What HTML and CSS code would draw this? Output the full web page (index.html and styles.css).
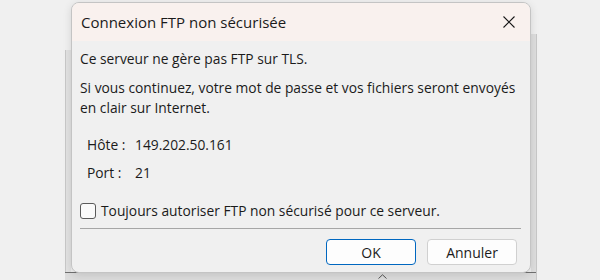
FILE: index.html
```html
<!DOCTYPE html>
<html lang="fr">
<head>
<meta charset="utf-8">
<title>Connexion FTP non sécurisée</title>
<link rel="stylesheet" href="styles.css">
</head>
<body>
<div class="backdrop">
  <div class="back-left"></div>
  <div class="back-right"></div>
  <div class="back-bottom">
    <svg class="caret" width="9" height="5" viewBox="0 0 9 5"><path d="M0.5 4.5 L4.5 0.8 L8.5 4.5" stroke="#555" stroke-width="1" fill="none"/></svg>
  </div>
</div>
<div class="dialog">
  <div class="titlebar">
    <span class="title">Connexion FTP non sécurisée</span>
    <svg class="close" width="12" height="12" viewBox="0 0 12 12"><path d="M0.5 0.5 L11.5 11.5 M11.5 0.5 L0.5 11.5" stroke="#1a1a1a" stroke-width="1.1" fill="none"/></svg>
  </div>
  <div class="content">
    <p class="line first">Ce serveur ne gère pas FTP sur TLS.</p>
    <p class="line para">Si vous continuez, votre mot de passe et vos fichiers seront envoyés<br>en clair sur Internet.</p>
    <div class="info">
      <span class="label">Hôte :</span><span>149.202.50.161</span>
      <span class="label">Port :</span><span>21</span>
    </div>
    <label class="check"><span class="box"></span>Toujours autoriser FTP non sécurisé pour ce serveur.</label>
    <div class="sep"></div>
    <div class="buttons">
      <button class="btn default">OK</button>
      <button class="btn">Annuler</button>
    </div>
  </div>
</div>
</body>
</html>
```
FILE: styles.css
```css
html, body { margin: 0; padding: 0; }
body {
  width: 600px; height: 280px; overflow: hidden;
  background: #f0f0f0;
  font-family: "Segoe UI", "Open Sans", "Noto Sans", sans-serif;
  color: #1b1b1b;
  position: relative;
}
.backdrop { position: absolute; inset: 0; }
.back-left {
  position: absolute; left: 65px; top: 50px; width: 5px; height: 222px;
  background: #e2e2e2; border-left: 1px solid #c8c8c8;
}
.back-right {
  position: absolute; left: 531px; top: 34px; width: 5px; height: 246px;
  background: #dedede; border-right: 1px solid #c8c8c8;
}
.back-bottom {
  position: absolute; left: 65px; top: 272px; width: 471px; height: 8px;
  background: #dcdcdc; border-top: 1px solid #707070;
}
.caret { position: absolute; left: 313px; top: 1px; }
.dialog {
  position: absolute; left: 71px; top: 2px; width: 458px; height: 269px;
  border: 1px solid #c4c4c4; border-radius: 8px; overflow: hidden;
  background: #f0f0f0;
  box-shadow: 0 2px 8px rgba(0,0,0,0.12);
}
.titlebar {
  height: 38px; background: #f9f1ee;
  display: flex; align-items: center; justify-content: space-between;
  padding: 0 15px 0 9px;
}
.title { font-size: 15px; }
.content { padding: 8px 9px 0 8px; font-size: 13.8px; white-space: nowrap; }
.line { margin: 0; line-height: 20px; }
.first { margin-top: 0; }
.para { margin-top: 9px; }
.info {
  display: grid; grid-template-columns: 48px auto; row-gap: 8px;
  margin: 17px 0 0 7px; line-height: 20px;
}
.check { display: flex; align-items: center; gap: 5px; margin-top: 18px; line-height: 20px; }
.box {
  width: 14px; height: 14px; border: 1px solid #5a5a5a; border-radius: 3px; background: #fafafa;
}
.sep { height: 1px; background: #a6a6a6; margin: 7px 0 0 0; }
.buttons { display: flex; justify-content: flex-end; gap: 11px; margin-top: 10px; padding-right: 4px; }
.btn {
  width: 90px; height: 26px; font: inherit; font-size: 14px; color: #1b1b1b;
  background: #fdfdfd; border: 1px solid #d0d0d0; border-radius: 4px; padding: 0;
}
.btn.default { border-color: #0067c0; }
```
